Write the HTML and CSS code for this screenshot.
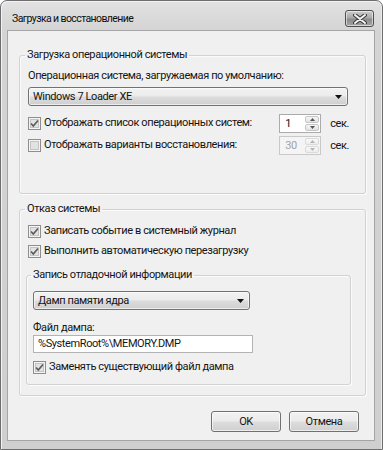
FILE: index.html
```html
<!DOCTYPE html>
<html lang="ru">
<head>
<meta charset="utf-8">
<title>Загрузка и восстановление</title>
<link rel="stylesheet" href="styles.css">
</head>
<body>
<div class="window">
  <div class="titlebar">
    <span class="title">Загрузка и восстановление</span>
    <div class="close">
      <svg width="14" height="10" viewBox="0 0 14 10"><path d="M2 1 L12 9 M12 1 L2 9" stroke="#3a3a3a" stroke-width="4" stroke-linecap="round"/><path d="M2 1 L12 9 M12 1 L2 9" stroke="#f4f4f4" stroke-width="2" stroke-linecap="round"/></svg>
    </div>
  </div>
  <div class="client">
    <fieldset class="group g1">
      <legend>Загрузка операционной системы</legend>
      <div class="label first">Операционная система, загружаемая по умолчанию:</div>
      <div class="combo wide"><span>Windows 7 Loader XE</span><svg class="arrow" width="7" height="4" viewBox="0 0 7 4"><path d="M0 0 H7 L3.5 4 Z" fill="#111"/></svg></div>
      <div class="row spinrow r1">
        <span class="check"><svg class="box" width="13" height="13" viewBox="0 0 13 13"><rect x="0.5" y="0.5" width="12" height="12" fill="#f4f4f4" stroke="#8e8e8e"/><rect x="2.5" y="2.5" width="8" height="8" fill="#e2e2e2" stroke="#c4c4c4"/><path d="M3 6.5 L5.3 9 L10 3.5" fill="none" stroke="#5a5a5a" stroke-width="1.6"/></svg><span class="ctext">Отображать список операционных систем:</span></span>
        <div class="spin"><span class="val">1</span><div class="btns"><span class="sb"><svg width="5" height="3" viewBox="0 0 5 3"><path d="M0 3 L2.5 0 L5 3 Z" fill="#555"/></svg></span><span class="sb"><svg width="5" height="3" viewBox="0 0 5 3"><path d="M0 0 L2.5 3 L5 0 Z" fill="#555"/></svg></span></div></div>
        <span class="unit">сек.</span>
      </div>
      <div class="row spinrow r2">
        <span class="check"><svg class="box" width="13" height="13" viewBox="0 0 13 13"><rect x="0.5" y="0.5" width="12" height="12" fill="#f4f4f4" stroke="#8e8e8e"/><rect x="2.5" y="2.5" width="8" height="8" fill="#e2e2e2" stroke="#c4c4c4"/></svg><span class="ctext">Отображать варианты восстановления:</span></span>
        <div class="spin disabled"><span class="val">30</span><div class="btns"><span class="sb"><svg width="5" height="3" viewBox="0 0 5 3"><path d="M0 3 L2.5 0 L5 3 Z" fill="#b4b4b4"/></svg></span><span class="sb"><svg width="5" height="3" viewBox="0 0 5 3"><path d="M0 0 L2.5 3 L5 0 Z" fill="#b4b4b4"/></svg></span></div></div>
        <span class="unit">сек.</span>
      </div>
    </fieldset>

    <fieldset class="group g2">
      <legend>Отказ системы</legend>
      <div class="row r3">
        <span class="check"><svg class="box" width="13" height="13" viewBox="0 0 13 13"><rect x="0.5" y="0.5" width="12" height="12" fill="#f4f4f4" stroke="#8e8e8e"/><rect x="2.5" y="2.5" width="8" height="8" fill="#e2e2e2" stroke="#c4c4c4"/><path d="M3 6.5 L5.3 9 L10 3.5" fill="none" stroke="#5a5a5a" stroke-width="1.6"/></svg><span class="ctext">Записать событие в системный журнал</span></span>
      </div>
      <div class="row">
        <span class="check"><svg class="box" width="13" height="13" viewBox="0 0 13 13"><rect x="0.5" y="0.5" width="12" height="12" fill="#f4f4f4" stroke="#8e8e8e"/><rect x="2.5" y="2.5" width="8" height="8" fill="#e2e2e2" stroke="#c4c4c4"/><path d="M3 6.5 L5.3 9 L10 3.5" fill="none" stroke="#5a5a5a" stroke-width="1.6"/></svg><span class="ctext">Выполнить автоматическую перезагрузку</span></span>
      </div>
      <fieldset class="group sub">
        <legend>Запись отладочной информации</legend>
        <div class="combo narrow"><span>Дамп памяти ядра</span><svg class="arrow" width="7" height="4" viewBox="0 0 7 4"><path d="M0 0 H7 L3.5 4 Z" fill="#111"/></svg></div>
        <div class="label dump">Файл дампа:</div>
        <div class="textbox">%SystemRoot%\MEMORY.DMP</div>
        <div class="row r4">
          <span class="check"><svg class="box" width="13" height="13" viewBox="0 0 13 13"><rect x="0.5" y="0.5" width="12" height="12" fill="#f4f4f4" stroke="#8e8e8e"/><rect x="2.5" y="2.5" width="8" height="8" fill="#e2e2e2" stroke="#c4c4c4"/><path d="M3 6.5 L5.3 9 L10 3.5" fill="none" stroke="#5a5a5a" stroke-width="1.6"/></svg><span class="ctext">Заменять существующий файл дампа</span></span>
        </div>
      </fieldset>
    </fieldset>

    <div class="buttons">
      <button class="btn">OK</button>
      <button class="btn">Отмена</button>
    </div>
  </div>
</div>
</body>
</html>
```
FILE: styles.css
```css
html, body {
  margin: 0;
  padding: 0;
  background: #ffffff;
}

body {
  font-family: Roboto, "Noto Sans", sans-serif;
  font-size: 11px;
  letter-spacing: -0.4px;
  color: #141414;
}

.window {
  box-sizing: border-box;
  width: 383px;
  height: 450px;
  border: 1px solid #6e6e6e;
  border-radius: 7px 7px 0 0;
  background: linear-gradient(180deg, #e2e2e2 0px, #d4d4d4 30px, #cfcfcf 100%);
  padding: 0 7px 8px 6px;
  box-shadow: inset 1px 1px 0 #f2f2f2, inset -1px 0 0 #ececec;
}

.titlebar {
  height: 29px;
  display: flex;
  align-items: center;
  justify-content: space-between;
  padding-left: 5px;
}

.title {
  font-size: 10.5px;
  letter-spacing: -0.6px;
  color: #0e0e0e;
  margin-top: 6px;
}

.close {
  box-sizing: border-box;
  width: 29px;
  height: 17px;
  margin-top: 6px;
  margin-right: 1px;
  border: 1px solid #4e4e4e;
  border-radius: 3px;
  background: linear-gradient(180deg, #cdcdcd 0%, #a9a9a9 45%, #8c8c8c 55%, #a4a4a4 100%);
  box-shadow: inset 0 0 0 1px rgba(255,255,255,0.55);
  display: flex;
  align-items: center;
  justify-content: center;
}

.client {
  box-sizing: border-box;
  height: 411px;
  border: 1px solid #a5a5a5;
  background: #f0f0f0;
  padding: 16px 8px 0 11px;
}

.group {
  margin: 0;
  border: 1px solid #d2d2d2;
  border-radius: 3px;
  box-shadow: inset 1px 1px 0 #fbfbfb, 1px 1px 0 #fbfbfb;
  min-width: 0;
}

.group legend {
  padding: 0 2px;
  line-height: 16px;
}

.g1 {
  padding: 0 16px 38px 8px;
}

.g1 legend {
  margin-left: -3px;
}

.g2 {
  margin-top: 7px;
  padding: 0 16px 10px 8px;
}

.g2 legend {
  margin-left: -3px;
}

.sub {
  margin: 6px -2px 0 -2px;
  padding: 0 7px 7px 6px;
}

.sub legend {
  margin-left: -2px;
}

.label {
  line-height: 16px;
}

.label.first {
  margin-top: 5px;
}

.label.dump {
  margin-top: 11px;
  line-height: 14px;
}

.combo {
  box-sizing: border-box;
  height: 19px;
  border: 1px solid #727272;
  border-radius: 3px;
  background: linear-gradient(180deg, #f3f3f3 0%, #ebebeb 48%, #dcdcdc 52%, #cfcfcf 100%);
  box-shadow: inset 0 0 0 1px rgba(255,255,255,0.6);
  display: flex;
  align-items: center;
  justify-content: space-between;
  padding: 0 5px 0 4px;
}

.combo.wide {
  margin-top: 3px;
  width: 320px;
}

.combo.narrow {
  margin-top: 8px;
  width: 217px;
}

.arrow {
  display: block;
}

.row {
  height: 20px;
  display: flex;
  align-items: center;
}

.r1 {
  margin-top: 7px;
}

.r2 {
  margin-top: 2px;
}

.r3 {
  margin-top: 4px;
}

.r4 {
  margin-top: 4px;
}

.check {
  display: flex;
  align-items: center;
}

.spinrow .check {
  width: 253px;
}

.box {
  display: block;
  flex: none;
}

.ctext {
  margin-left: 3px;
  line-height: 16px;
}

.spin {
  display: flex;
  height: 19px;
}

.spin .val {
  box-sizing: border-box;
  width: 26px;
  height: 19px;
  border: 1px solid #ababab;
  border-right: none;
  background: #ffffff;
  padding-left: 5px;
  line-height: 17px;
}

.btns {
  box-sizing: border-box;
  width: 16px;
  height: 19px;
  border: 1px solid #ababab;
  border-left: none;
  background: #ffffff;
  display: flex;
  flex-direction: column;
  padding: 1px 1px 1px 0;
  gap: 1px;
}

.sb {
  flex: 1;
  border: 1px solid #c6c6c6;
  border-radius: 2px;
  background: linear-gradient(180deg, #f6f6f6, #e2e2e2);
  display: flex;
  align-items: center;
  justify-content: center;
}

.sb svg {
  display: block;
}

.spin.disabled .val {
  background: #f4f4f4;
  color: #a3a3a3;
  border-color: #c9c9c9;
}

.spin.disabled .btns {
  background: #f4f4f4;
  border-color: #c9c9c9;
}

.spin.disabled .sb {
  border-color: #dadada;
  background: linear-gradient(180deg, #f8f8f8, #ededed);
}

.unit {
  margin-left: 9px;
}

.textbox {
  box-sizing: border-box;
  width: 220px;
  height: 18px;
  border: 1px solid #b3b3b3;
  background: #ffffff;
  padding-left: 4px;
  line-height: 16px;
}

.buttons {
  display: flex;
  justify-content: flex-end;
  gap: 8px;
  margin-top: 15px;
  padding-right: 7px;
}

.btn {
  box-sizing: border-box;
  width: 70px;
  height: 21px;
  border: 1px solid #707070;
  border-radius: 3px;
  background: linear-gradient(180deg, #f2f2f2 0%, #ebebeb 48%, #dddddd 52%, #cfcfcf 100%);
  box-shadow: inset 0 0 0 1px rgba(255,255,255,0.65);
  font-family: Roboto, "Noto Sans", sans-serif;
  font-size: 11px;
  letter-spacing: -0.4px;
  color: #141414;
  padding: 0;
}
```
